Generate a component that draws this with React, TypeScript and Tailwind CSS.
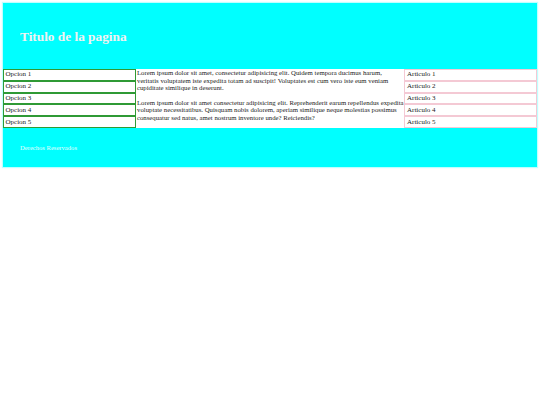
const OPCIONES = ['Opcion 1', 'Opcion 2', 'Opcion 3', 'Opcion 4', 'Opcion 5'];
const ARTICULOS = ['Articulo 1', 'Articulo 2', 'Articulo 3', 'Articulo 4', 'Articulo 5'];

export default function App() {
  return (
    <div className="min-h-[405px] w-[540px] bg-white p-[3px] font-['Liberation_Serif',serif] text-black">
      <div className="w-[534px] shadow-[0_0_1px_1px_rgba(0,255,255,0.25)]">
        <header className="flex h-[66px] items-center bg-[#00ffff] px-[17px] pt-[1px]">
          <h1 className="text-[13.3px] font-bold text-[#f2f2f2]">Titulo de la pagina</h1>
        </header>

        <main className="grid grid-cols-[133px_268px_133px]">
          <nav className="flex flex-col">
            {OPCIONES.map((op) => (
              <div
                key={op}
                className="flex h-[11.8px] items-center border-[1.3px] border-[#2f9a35] px-[1.5px] text-[7px] leading-none text-[#222]"
              >
                {op}
              </div>
            ))}
          </nav>

          <section className="pl-[1px] text-[6.75px] leading-[7.6px] text-[#222]">
            <p>
              Lorem ipsum dolor sit amet, consectetur adipisicing elit. Quidem tempora ducimus harum,
              veritatis voluptatem iste expedita totam ad suscipit! Voluptates est cum vero iste eum veniam
              cupiditate similique in deserunt.
            </p>
            <p className="mt-[7px]">
              Lorem ipsum dolor sit amet consectetur adipisicing elit. Reprehenderit earum repellendus expedita
              voluptate necessitatibus. Quisquam nobis dolorem, aperiam similique neque molestias possimus
              consequatur sed natus, amet nostrum inventore unde? Reiciendis?
            </p>
          </section>

          <aside className="flex flex-col">
            {ARTICULOS.map((ar) => (
              <div
                key={ar}
                className="flex h-[11.8px] items-center border border-[#f4c9d4] px-[2px] text-[7px] leading-none text-[#222]"
              >
                {ar}
              </div>
            ))}
          </aside>
        </main>

        <footer className="flex h-[39px] items-center bg-[#00ffff] px-[17px]">
          <p className="text-[6.6px] text-[#e6ffff]">Derechos Reservados</p>
        </footer>
      </div>
    </div>
  );
}
